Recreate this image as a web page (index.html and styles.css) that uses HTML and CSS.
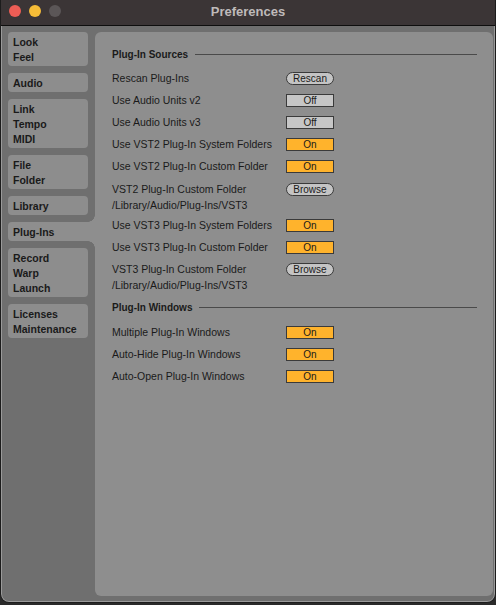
FILE: index.html
```html
<!DOCTYPE html>
<html lang="en">
<head>
    <meta charset="UTF-8">
    <title>Preferences</title>
    <link rel="stylesheet" href="styles.css">
</head>
<body>

<div class="window">
    <!-- title bar -->
    <div class="titlebar">
        <div class="lights">
            <span class="light red"></span>
            <span class="light yellow"></span>
            <span class="light gray"></span>
        </div>
        <div class="title">Preferences</div>
    </div>

    <div class="body">
        <!-- tabs -->
        <div class="sidebar">
            <div class="tab">Look<br>Feel</div>
            <div class="tab">Audio</div>
            <div class="tab">Link<br>Tempo<br>MIDI</div>
            <div class="tab">File<br>Folder</div>
            <div class="tab">Library</div>
            <div class="tab active">Plug-Ins</div>
            <div class="tab">Record<br>Warp<br>Launch</div>
            <div class="tab">Licenses<br>Maintenance</div>
        </div>

        <!-- settings -->
        <div class="panel">
            <div class="section">Plug-In Sources</div>
            <div class="row"><span class="label">Rescan Plug-Ins</span><span class="btn pill">Rescan</span></div>
            <div class="row"><span class="label">Use Audio Units v2</span><span class="btn off">Off</span></div>
            <div class="row"><span class="label">Use Audio Units v3</span><span class="btn off">Off</span></div>
            <div class="row"><span class="label">Use VST2 Plug-In System Folders</span><span class="btn on">On</span></div>
            <div class="row"><span class="label">Use VST2 Plug-In Custom Folder</span><span class="btn on">On</span></div>
            <div class="row folder"><span class="label">VST2 Plug-In Custom Folder</span><span class="btn pill">Browse</span></div>
            <div class="path">/Library/Audio/Plug-Ins/VST3</div>
            <div class="row"><span class="label">Use VST3 Plug-In System Folders</span><span class="btn on">On</span></div>
            <div class="row"><span class="label">Use VST3 Plug-In Custom Folder</span><span class="btn on">On</span></div>
            <div class="row"><span class="label">VST3 Plug-In Custom Folder</span><span class="btn pill">Browse</span></div>
            <div class="path">/Library/Audio/Plug-Ins/VST3</div>

            <div class="section">Plug-In Windows</div>
            <div class="row"><span class="label">Multiple Plug-In Windows</span><span class="btn on">On</span></div>
            <div class="row"><span class="label">Auto-Hide Plug-In Windows</span><span class="btn on">On</span></div>
            <div class="row"><span class="label">Auto-Open Plug-In Windows</span><span class="btn on">On</span></div>
        </div>
    </div>
</div>

</body>
</html>
```

FILE: styles.css
```css
*{margin:0;padding:0;box-sizing:border-box}
html,body{height:100%}
body{background:#2a2a2a;font-family:"Liberation Sans",Arial,sans-serif;color:#1a1a1a;overflow:hidden}

.window{height:603px;width:496px;display:flex;flex-direction:column;background:#6f6f6f;border:1px solid #1c1c1c;border-top:none;border-radius:0 0 9px 9px;box-shadow:inset 1px 0 #9a9a9a,inset -1px 0 #9a9a9a,inset 0 -1px #9a9a9a;overflow:hidden}

/* title bar */
.titlebar{height:26px;flex:none;background:#3b3536;border-bottom:1px solid #0e0e0e;display:flex;align-items:center;position:relative}
.lights{display:flex;gap:8px;padding-left:8px;margin-top:-3px}
.light{width:12px;height:12px;border-radius:50%}
.light.red{background:#ed5d55}
.light.yellow{background:#f5bc37}
.light.gray{background:#5b5657}
.title{position:absolute;left:0;right:0;top:4px;text-align:center;font-size:13px;font-weight:bold;color:#bfbaba}

.body{flex:1;display:flex;padding:6px 2px 6px 0}

/* tabs */
.sidebar{width:94px;flex:none;padding-left:7px;display:flex;flex-direction:column;gap:7.5px}
.tab{width:80px;background:#8d8d8d;border-radius:4px;padding:2.5px 5px 1px;font-size:10.5px;font-weight:bold;line-height:15px;color:#1a1a1a}
.tab.active{width:87px;border-radius:4px 0 0 4px;position:relative;background:#8e8e8e}
.tab.active::before,.tab.active::after{content:"";position:absolute;right:0;width:7px;height:7.5px}
.tab.active::before{top:-7.5px;background:radial-gradient(circle at 0 0,transparent 6.5px,#8e8e8e 7px)}
.tab.active::after{bottom:-7.5px;background:radial-gradient(circle at 0 100%,transparent 6.5px,#8e8e8e 7px)}

/* settings panel */
.panel{flex:1;background:#8e8e8e;border-radius:6px;padding:10px 16px 0 17px}
.section{display:flex;align-items:center;height:24px;margin-bottom:1px;font-size:10px;font-weight:bold}
.section::after{content:"";flex:1;border-top:1px solid #4a4a4a;margin-left:7px}
.path + .section{margin-top:1px;margin-bottom:2px}
.row{display:flex;align-items:center;height:22px;font-size:10.5px}
.row.folder{margin-top:1px}
.label{width:174px;flex:none}
.path{height:14px;line-height:10px;font-size:10.5px}

.btn{width:48px;height:13px;border:1px solid #3a3a3a;font-size:10px;line-height:11px;text-align:center;color:#1a1a1a}
.btn.off{background:#c6c6c6}
.btn.on{background:#ffb32c}
.btn.pill{background:#c4c4c4;border-radius:7px}
```
